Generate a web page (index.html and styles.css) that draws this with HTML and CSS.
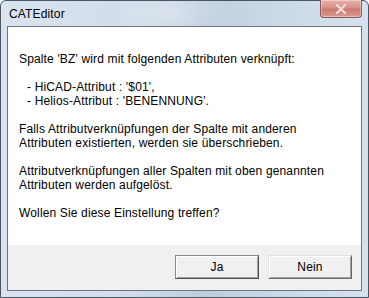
FILE: index.html
```html
<!DOCTYPE html>
<html lang="de">
    <head>
        <meta charset="UTF-8" />
        <title>CATEditor</title>
        <link rel="stylesheet" href="styles.css">
    </head>
    <body>
        <div class="window">
            <!-- Titelleiste -->
            <div class="titlebar">
                <span class="title">CATEditor</span>
                <button class="close" aria-label="Schließen">
                    <svg width="12" height="10" viewBox="0 0 12 10">
                        <path d="M2 1 L10 9 M10 1 L2 9" stroke="#f3dcd8" stroke-width="2.2" stroke-linecap="square" />
                    </svg>
                </button>
            </div>

            <!-- Inhalt -->
            <div class="client">
                <div class="message">
                    <p>Spalte 'BZ' wird mit folgenden Attributen verknüpft:</p>
                    <p>
                        <span class="item">- HiCAD-Attribut : '$01',</span>
                        <span class="item">- Helios-Attribut : 'BENENNUNG'.</span>
                    </p>
                    <p>Falls Attributverknüpfungen der Spalte mit anderen<br>Attributen existierten, werden sie überschrieben.</p>
                    <p>Attributverknüpfungen aller Spalten mit oben genannten<br>Attributen werden aufgelöst.</p>
                    <p>Wollen Sie diese Einstellung treffen?</p>
                </div>
                <div class="footer">
                    <button class="btn default">Ja</button>
                    <button class="btn">Nein</button>
                </div>
            </div>
        </div>
    </body>
</html>
```

FILE: styles.css
```css
html, body {
    margin: 0;
    padding: 0;
    width: 369px;
    height: 298px;
    overflow: hidden;
    background: #ffffff;
}

body {
    font-family: "Liberation Sans", Arial, sans-serif;
    font-size: 12px;
    letter-spacing: 0.15px;
    color: #000;
}

.window {
    box-sizing: border-box;
    width: 369px;
    height: 298px;
    display: flex;
    flex-direction: column;
    padding: 0 6px 6px 6px;
    border: 1px solid #4b5663;
    border-radius: 6px 6px 0 0;
    background:
        radial-gradient(ellipse 60px 30px at 170px 10px, rgba(255, 255, 255, 0.35), transparent),
        linear-gradient(90deg, #d9e4f0 0%, #d1dde9 35%, #bfcede 55%, #cbd9e7 75%, #d5e1ed 100%);
}

.titlebar {
    height: 25px;
    display: flex;
    align-items: flex-start;
}

.title {
    margin: 6px 0 0 2px;
    line-height: 14px;
    color: #000;
}

.close {
    margin: -1px 0 0 auto;
    width: 42px;
    height: 18px;
    padding: 0;
    display: flex;
    justify-content: center;
    align-items: center;
    border: 1px solid #8c5a58;
    border-top: none;
    border-radius: 0 0 4px 4px;
    background: linear-gradient(#e9b3ad, #d99189 45%, #cc7a72 55%, #d89a93);
    box-shadow: inset 0 0 0 1px rgba(255, 255, 255, 0.35);
}

.client {
    flex: 1;
    display: flex;
    flex-direction: column;
    border: 1px solid #6c7785;
    background: #f0f0f0;
}

.message {
    flex: 1;
    background: #fff;
    padding: 25px 0 0 11px;
    line-height: 14px;
}

.message p {
    margin: 0 0 14px 0;
}

.item {
    display: block;
    padding-left: 8px;
}

.footer {
    height: 45px;
    display: flex;
    justify-content: flex-end;
    align-items: flex-start;
    gap: 9px;
    padding: 10px 9px 0 0;
    box-sizing: border-box;
}

.btn {
    width: 84px;
    height: 24px;
    padding: 0;
    font-family: inherit;
    font-size: 12px;
    letter-spacing: inherit;
    color: #000;
    background: #f0f0f0;
    border: 1px solid;
    border-color: #e3e3e3 #696969 #696969 #e3e3e3;
    box-shadow: inset 1px 1px 0 #ffffff, inset -1px -1px 0 #a0a0a0;
}

.btn.default {
    border-color: #8a8a8a #505050 #505050 #8a8a8a;
}
```
